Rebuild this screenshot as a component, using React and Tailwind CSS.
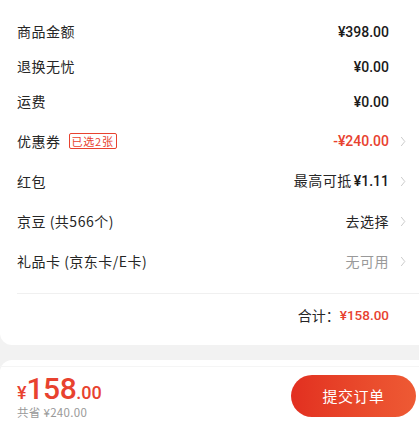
import React from "react";

const cjk = { fontFamily: '"Noto Sans CJK SC", "Noto Sans", sans-serif' };
const num = { fontFamily: 'Roboto, "Noto Sans CJK SC", sans-serif' };

function Chevron() {
  return (
    <svg width="6" height="11" viewBox="0 0 6 11" className="ml-[11px] shrink-0">
      <path d="M1.2 1 L4.8 5.5 L1.2 10" fill="none" stroke="#cccccc" strokeWidth="1" />
    </svg>
  );
}

function Row({ label, tag, value, chevron, h = "h-[35px]", mt = "" }) {
  return (
    <div className={`flex items-center justify-between ${h} ${mt}`}>
      <div className="flex items-center">
        <span className="text-[14px] tracking-[0.5px] text-[#262626]" style={cjk}>{label}</span>
        {tag && (
          <span
            className="ml-[8px] px-[2px] h-[16px] flex items-center border border-[#e8422f] rounded-[2px] text-[11px] tracking-[0.8px] leading-none text-[#e8422f]"
            style={cjk}
          >
            {tag}
          </span>
        )}
      </div>
      <div className={`flex items-center ${chevron ? "pr-[13px]" : "pr-[30px]"}`}>
        <span className="text-[14px]" style={cjk}>{value}</span>
        {chevron && <Chevron />}
      </div>
    </div>
  );
}

export default function App() {
  return (
    <div className="w-[419px] h-[429px] bg-[#f2f2f2] overflow-hidden">
      <div className="bg-white rounded-bl-[12px] pl-[17px] pt-[14px]">
        <Row label="商品金额" value={<span style={num} className="font-medium text-[#1a1a1a]">¥398.00</span>} />
        <Row label="退换无忧" value={<span style={num} className="font-medium text-[#1a1a1a]">¥0.00</span>} />
        <Row label="运费" value={<span style={num} className="font-medium text-[#1a1a1a]">¥0.00</span>} />
        <Row
          label="优惠券"
          tag="已选2张"
          h="h-[40px]"
          mt="mt-[2px]"
          chevron
          value={<span style={num} className="font-medium text-[#e8422f]">-¥240.00</span>}
        />
        <Row
          label="红包"
          h="h-[40px]"
          chevron
          value={
            <span className="text-[#262626] tracking-[0.5px]">
              最高可抵<span style={num} className="font-medium text-[#1a1a1a] ml-[2px] tracking-normal">¥1.11</span>
            </span>
          }
        />
        <Row label="京豆 (共566个)" h="h-[40px]" chevron value={<span className="text-[#262626] tracking-[0.5px]">去选择</span>} />
        <Row label="礼品卡 (京东卡/E卡)" h="h-[40px]" chevron value={<span className="text-[#999] tracking-[0.5px]">无可用</span>} />
        <div className="mt-[12px] border-t border-[#f0f0f0]" />
        <div className="h-[42px] flex items-center justify-end pr-[30px]">
          <span className="text-[14px] text-[#262626]" style={cjk}>合计：</span>
          <span className="text-[13.5px] font-medium text-[#e8422f]" style={num}>¥158.00</span>
        </div>
        <div className="h-[9px]" />
      </div>
      <div className="h-[15px]" />
      <div className="bg-white rounded-tl-[12px] h-[70px]">
        <div className="h-[7px] border-b border-[#f5f5f5]" />
        <div className="flex items-center justify-between pl-[17px] pr-[3px] pt-[7px]">
          <div className="flex flex-col">
            <div className="flex items-baseline text-[#e8422f] leading-none" style={num}>
              <span className="text-[18px] font-medium">¥</span>
              <span className="text-[30px] font-medium tracking-[-0.5px]">158</span>
              <span className="text-[18px] font-medium">.00</span>
            </div>
            <span className="mt-[3px] text-[11.5px] leading-none text-[#999] tracking-[0.3px]" style={cjk}>共省 ¥240.00</span>
          </div>
          <button
            className="w-[125px] h-[42px] rounded-full bg-gradient-to-r from-[#e22f20] to-[#ee5a34] text-white text-[15px] tracking-[0.5px] flex items-center justify-center"
            style={cjk}
          >
            提交订单
          </button>
        </div>
      </div>
    </div>
  );
}
